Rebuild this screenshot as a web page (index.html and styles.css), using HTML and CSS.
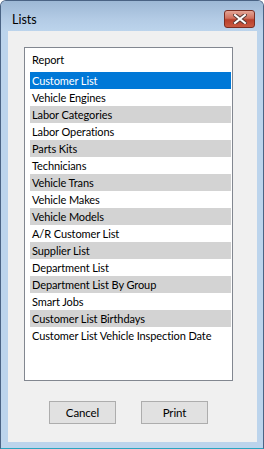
FILE: index.html
```html
<!DOCTYPE html>
<html lang="en">

<head>
  <meta charset="UTF-8">
  <title>Lists</title>
  <link rel="stylesheet" href="styles.css">
</head>

<body>
  <div class="window">
    <div class="title-bar">
      <span class="title">Lists</span>
      <button class="close-btn" aria-label="Close">
        <svg width="14" height="10" viewBox="0 0 14 10">
          <path d="M2 1 L12 9 M12 1 L2 9" stroke="#5a3a36" stroke-width="4" stroke-linecap="square" />
          <path d="M2 1 L12 9 M12 1 L2 9" stroke="#ffffff" stroke-width="2" stroke-linecap="square" />
        </svg>
      </button>
    </div>

    <div class="client">
      <div class="report-list">
        <div class="list-header">Report</div>
        <ul class="items">
          <li class="item selected">Customer List</li>
          <li class="item">Vehicle Engines</li>
          <li class="item alt">Labor Categories</li>
          <li class="item">Labor Operations</li>
          <li class="item alt">Parts Kits</li>
          <li class="item">Technicians</li>
          <li class="item alt">Vehicle Trans</li>
          <li class="item">Vehicle Makes</li>
          <li class="item alt">Vehicle Models</li>
          <li class="item">A/R Customer List</li>
          <li class="item alt">Supplier List</li>
          <li class="item">Department List</li>
          <li class="item alt">Department List By Group</li>
          <li class="item">Smart Jobs</li>
          <li class="item alt">Customer List Birthdays</li>
          <li class="item">Customer List Vehicle Inspection Date</li>
        </ul>
      </div>

      <div class="actions">
        <button class="btn">Cancel</button>
        <button class="btn">Print</button>
      </div>
    </div>
  </div>
</body>

</html>
```

FILE: styles.css
```css
* {
  box-sizing: border-box;
}

body {
  margin: 0;
  font-family: Lato, "Liberation Sans", sans-serif;
  font-size: 11px;
  letter-spacing: -0.1px;
  color: #000;
}

.window {
  width: 264px;
  height: 449px;
  border: 1px solid #4a6384;
  border-bottom-color: #2aa5c0;
  border-radius: 6px 6px 0 0;
  background: #bcd4ec;
  padding: 0 6px 6px 7px;
  display: flex;
  flex-direction: column;
}

.title-bar {
  height: 30px;
  margin: 0 -6px 0 -7px;
  padding: 0 8px 0 11px;
  border-radius: 5px 5px 0 0;
  background: linear-gradient(to bottom, #9db8d5, #b3cbe5 60%, #bcd4ec);
  display: flex;
  justify-content: space-between;
}

.title {
  margin-top: 11px;
  font-size: 12.5px;
  letter-spacing: 0;
  line-height: 16px;
}

.close-btn {
  margin-top: 9px;
  width: 31px;
  height: 18px;
  padding: 0;
  border: 1px solid #7b2d22;
  border-radius: 3px;
  background: linear-gradient(to bottom, #e4a596, #d0705e 45%, #b8402c 55%, #c95a42);
  display: flex;
  align-items: center;
  justify-content: center;
}

.client {
  flex: 1;
  background: #f0f0f0;
  padding: 16px 0 0 16px;
}

.report-list {
  width: 209px;
  height: 334px;
  background: #fff;
  border: 1px solid #828790;
  padding: 3px 1px 0 5px;
}

.list-header {
  height: 17px;
  line-height: 17px;
  padding-left: 2px;
  margin-bottom: 4px;
}

.items {
  list-style: none;
  margin: 0;
  padding: 0;
}

.item {
  height: 17px;
  line-height: 17px;
  padding-left: 2px;
  white-space: nowrap;
}

.item.alt {
  background: #d3d3d3;
}

.item.selected {
  background: #0078d7;
  color: #fff;
}

.actions {
  width: 209px;
  margin-top: 20px;
  display: flex;
  justify-content: center;
  gap: 25px;
}

.btn {
  width: 67px;
  height: 23px;
  padding: 0;
  font-family: inherit;
  font-size: 11.5px;
  letter-spacing: -0.1px;
  color: #000;
  background: #e1e1e1;
  border: 1px solid #adadad;
}
```
